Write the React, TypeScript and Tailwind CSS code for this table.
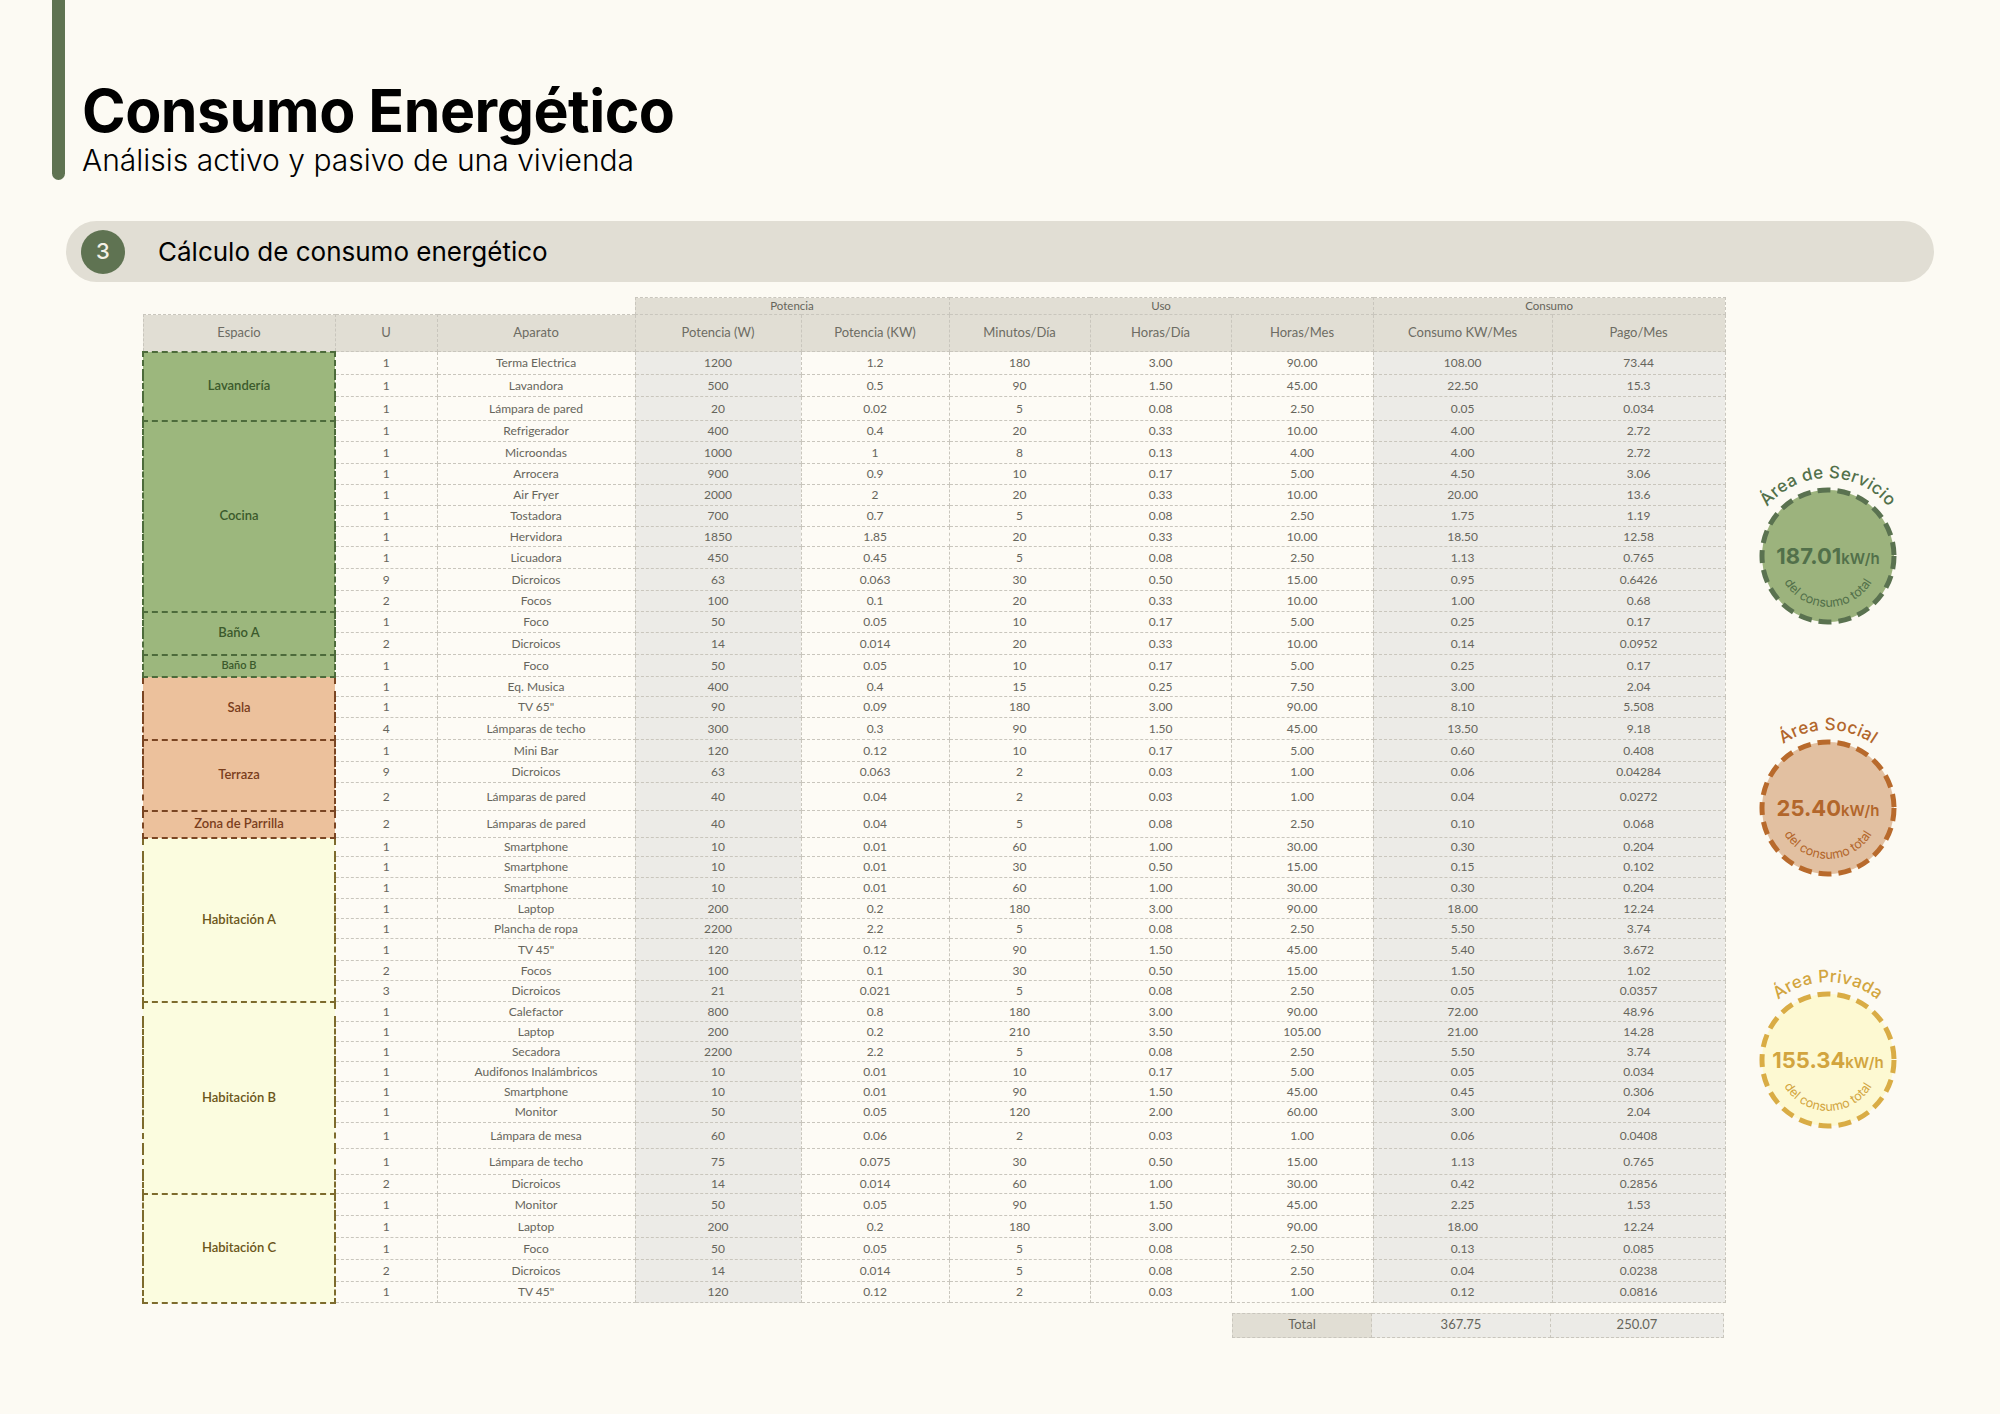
import React from "react";

type Item = [string, string, string, string, string, string, string, string, string, number];
type Tone = "green" | "orange" | "yellow";
type Group = { name: string; tone: Tone; small?: boolean; items: Item[] };

const groups: Group[] = [
  {
    name: "Lavandería",
    tone: "green",
    items: [
      ["1", "Terma Electrica", "1200", "1.2", "180", "3.00", "90.00", "108.00", "73.44", 23],
      ["1", "Lavandora", "500", "0.5", "90", "1.50", "45.00", "22.50", "15.3", 22],
      ["1", "Lámpara de pared", "20", "0.02", "5", "0.08", "2.50", "0.05", "0.034", 24],
    ],
  },
  {
    name: "Cocina",
    tone: "green",
    items: [
      ["1", "Refrigerador", "400", "0.4", "20", "0.33", "10.00", "4.00", "2.72", 21],
      ["1", "Microondas", "1000", "1", "8", "0.13", "4.00", "4.00", "2.72", 22],
      ["1", "Arrocera", "900", "0.9", "10", "0.17", "5.00", "4.50", "3.06", 21],
      ["1", "Air Fryer", "2000", "2", "20", "0.33", "10.00", "20.00", "13.6", 21],
      ["1", "Tostadora", "700", "0.7", "5", "0.08", "2.50", "1.75", "1.19", 21],
      ["1", "Hervidora", "1850", "1.85", "20", "0.33", "10.00", "18.50", "12.58", 20],
      ["1", "Licuadora", "450", "0.45", "5", "0.08", "2.50", "1.13", "0.765", 22],
      ["9", "Dicroicos", "63", "0.063", "30", "0.50", "15.00", "0.95", "0.6426", 22],
      ["2", "Focos", "100", "0.1", "20", "0.33", "10.00", "1.00", "0.68", 21],
    ],
  },
  {
    name: "Baño A",
    tone: "green",
    items: [
      ["1", "Foco", "50", "0.05", "10", "0.17", "5.00", "0.25", "0.17", 21],
      ["2", "Dicroicos", "14", "0.014", "20", "0.33", "10.00", "0.14", "0.0952", 22],
    ],
  },
  {
    name: "Baño B",
    tone: "green",
    small: true,
    items: [["1", "Foco", "50", "0.05", "10", "0.17", "5.00", "0.25", "0.17", 22]],
  },
  {
    name: "Sala",
    tone: "orange",
    items: [
      ["1", "Eq. Musica", "400", "0.4", "15", "0.25", "7.50", "3.00", "2.04", 20],
      ["1", "TV 65\"", "90", "0.09", "180", "3.00", "90.00", "8.10", "5.508", 21],
      ["4", "Lámparas de techo", "300", "0.3", "90", "1.50", "45.00", "13.50", "9.18", 22],
    ],
  },
  {
    name: "Terraza",
    tone: "orange",
    items: [
      ["1", "Mini Bar", "120", "0.12", "10", "0.17", "5.00", "0.60", "0.408", 22],
      ["9", "Dicroicos", "63", "0.063", "2", "0.03", "1.00", "0.06", "0.04284", 21],
      ["2", "Lámparas de pared", "40", "0.04", "2", "0.03", "1.00", "0.04", "0.0272", 28],
    ],
  },
  {
    name: "Zona de Parrilla",
    tone: "orange",
    items: [["2", "Lámparas de pared", "40", "0.04", "5", "0.08", "2.50", "0.10", "0.068", 27]],
  },
  {
    name: "Habitación A",
    tone: "yellow",
    items: [
      ["1", "Smartphone", "10", "0.01", "60", "1.00", "30.00", "0.30", "0.204", 19],
      ["1", "Smartphone", "10", "0.01", "30", "0.50", "15.00", "0.15", "0.102", 21],
      ["1", "Smartphone", "10", "0.01", "60", "1.00", "30.00", "0.30", "0.204", 21],
      ["1", "Laptop", "200", "0.2", "180", "3.00", "90.00", "18.00", "12.24", 20],
      ["1", "Plancha de ropa", "2200", "2.2", "5", "0.08", "2.50", "5.50", "3.74", 20],
      ["1", "TV 45\"", "120", "0.12", "90", "1.50", "45.00", "5.40", "3.672", 22],
      ["2", "Focos", "100", "0.1", "30", "0.50", "15.00", "1.50", "1.02", 20],
      ["3", "Dicroicos", "21", "0.021", "5", "0.08", "2.50", "0.05", "0.0357", 21],
    ],
  },
  {
    name: "Habitación B",
    tone: "yellow",
    items: [
      ["1", "Calefactor", "800", "0.8", "180", "3.00", "90.00", "72.00", "48.96", 20],
      ["1", "Laptop", "200", "0.2", "210", "3.50", "105.00", "21.00", "14.28", 20],
      ["1", "Secadora", "2200", "2.2", "5", "0.08", "2.50", "5.50", "3.74", 20],
      ["1", "Audifonos Inalámbricos", "10", "0.01", "10", "0.17", "5.00", "0.05", "0.034", 20],
      ["1", "Smartphone", "10", "0.01", "90", "1.50", "45.00", "0.45", "0.306", 20],
      ["1", "Monitor", "50", "0.05", "120", "2.00", "60.00", "3.00", "2.04", 21],
      ["1", "Lámpara de mesa", "60", "0.06", "2", "0.03", "1.00", "0.06", "0.0408", 26],
      ["1", "Lámpara de techo", "75", "0.075", "30", "0.50", "15.00", "1.13", "0.765", 26],
      ["2", "Dicroicos", "14", "0.014", "60", "1.00", "30.00", "0.42", "0.2856", 19],
    ],
  },
  {
    name: "Habitación C",
    tone: "yellow",
    items: [
      ["1", "Monitor", "50", "0.05", "90", "1.50", "45.00", "2.25", "1.53", 22],
      ["1", "Laptop", "200", "0.2", "180", "3.00", "90.00", "18.00", "12.24", 22],
      ["1", "Foco", "50", "0.05", "5", "0.08", "2.50", "0.13", "0.085", 22],
      ["2", "Dicroicos", "14", "0.014", "5", "0.08", "2.50", "0.04", "0.0238", 22],
      ["1", "TV 45\"", "120", "0.12", "2", "0.03", "1.00", "0.12", "0.0816", 21],
    ],
  },
];

const toneCls: Record<Tone, string> = {
  green: "bg-[#9cb77d] border-[#4d6b3b] text-[#3b5a2c]",
  orange: "bg-[#ecc19c] border-[#7a4522] text-[#7a3e1c]",
  yellow: "bg-[#fbfcdf] border-[#7d6b2d] text-[#6b561a]",
};

const cell = "border border-dashed border-[#c9c6bd] text-center align-middle p-0";
const light = "bg-[#fdfbf5]";
const grey = "bg-[#ecebe7]";
const colBg = [light, light, grey, light, light, light, light, grey, grey];

const widths = [192, 102, 198, 166, 148, 141, 141, 142, 179, 173];

function Badge({
  id,
  title,
  value,
  fill,
  stroke,
  color,
}: {
  id: string;
  title: string;
  value: string;
  fill: string;
  stroke: string;
  color: string;
}) {
  return (
    <svg width="208" height="252" viewBox="0 0 208 252">
      <defs>
        <path id={`top-${id}`} d="M 26 126 A 78 78 0 0 1 182 126" />
        <path id={`bot-${id}`} d="M 53 126 A 51 51 0 0 0 155 126" />
      </defs>
      <circle cx="104" cy="126" r="66" fill={fill} stroke={stroke} strokeWidth="5" strokeDasharray="13 7" />
      <text fill={color} fontSize="17" fontWeight="500" fontFamily="Inter, sans-serif" letterSpacing="0.3">
        <textPath href={`#top-${id}`} startOffset="50%" textAnchor="middle">
          {title}
        </textPath>
      </text>
      <text x="104" y="134" textAnchor="middle" fill={color} fontFamily="Inter, sans-serif">
        <tspan fontSize="22" fontWeight="700">{value}</tspan>
        <tspan fontSize="15" fontWeight="600">kW/h</tspan>
      </text>
      <text fill={color} fontSize="12.5" fontWeight="400" fontFamily="Inter, sans-serif">
        <textPath href={`#bot-${id}`} startOffset="50%" textAnchor="middle">
          del consumo total
        </textPath>
      </text>
    </svg>
  );
}

export default function App() {
  return (
    <div className="w-[2000px] h-[1414px] bg-[#fcfaf3] overflow-hidden font-['Inter',sans-serif]">
      {/* Header */}
      <div className="flex items-start">
        <div className="ml-[52px] w-[13px] h-[180px] bg-[#5f7352] rounded-b-full" />
        <div className="ml-[17px] pt-[81px]">
          <h1 className="text-[59px] leading-none font-bold text-black tracking-[-0.5px]">Consumo Energético</h1>
          <p className="mt-[5px] text-[30px] leading-none font-light text-black">Análisis activo y pasivo de una vivienda</p>
        </div>
      </div>

      {/* Section pill */}
      <div className="ml-[66px] mt-[41px] w-[1868px] h-[61px] rounded-full bg-[#e1ded4] flex items-center pl-[15px]">
        <div className="w-[44px] h-[44px] rounded-full bg-[#5f7352] flex items-center justify-center text-[#f4f1e6] text-[22px] font-medium">
          3
        </div>
        <span className="ml-[33px] text-[26px] text-black">Cálculo de consumo energético</span>
      </div>

      {/* Table + badges */}
      <div className="flex items-start ml-[142px] mt-[15px]">
        <div className="w-[1582px]">
          <table className="table-fixed w-[1582px] font-['Lato',sans-serif] text-[12px] text-[#66655b]">
            <colgroup>
              {widths.map((w, i) => (
                <col key={i} style={{ width: w }} />
              ))}
            </colgroup>
            <thead>
              <tr className="h-[17px]">
                <td colSpan={3} className="p-0" />
                <th colSpan={2} className={`${cell} bg-[#e1ded4] font-normal text-[11.5px] leading-none`}>Potencia</th>
                <th colSpan={3} className={`${cell} bg-[#e1ded4] font-normal text-[11.5px] leading-none`}>Uso</th>
                <th colSpan={2} className={`${cell} bg-[#e1ded4] font-normal text-[11.5px] leading-none`}>Consumo</th>
              </tr>
              <tr className="h-[37px] bg-[#e1ded4]">
                {[
                  "Espacio",
                  "U",
                  "Aparato",
                  "Potencia (W)",
                  "Potencia (KW)",
                  "Minutos/Día",
                  "Horas/Día",
                  "Horas/Mes",
                  "Consumo KW/Mes",
                  "Pago/Mes",
                ].map((h) => (
                  <th key={h} className={`${cell} font-normal text-[13px] text-[#6d6c63]`}>
                    {h}
                  </th>
                ))}
              </tr>
            </thead>
            <tbody>
              {groups.map((g) =>
                g.items.map((it, idx) => (
                  <tr key={g.name + idx} style={{ height: it[9] }}>
                    {idx === 0 && (
                      <td
                        rowSpan={g.items.length}
                        className={`border-2 border-dashed text-center align-middle p-0 font-semibold ${
                          g.small ? "text-[11px]" : "text-[13px]"
                        } ${toneCls[g.tone]}`}
                      >
                        {g.name}
                      </td>
                    )}
                    {it.slice(0, 9).map((v, ci) => (
                      <td key={ci} className={`${cell} ${colBg[ci]} leading-none`}>
                        {v}
                      </td>
                    ))}
                  </tr>
                ))
              )}
            </tbody>
          </table>

          {/* Total */}
          <div className="flex mt-[9px] ml-[1090px] h-[25px] font-['Lato',sans-serif] text-[13px] text-[#66655b]">
            <div className="w-[140px] border border-dashed border-[#c9c6bd] bg-[#e1ded4] flex items-center justify-center">
              Total
            </div>
            <div className="w-[179px] border border-l-0 border-dashed border-[#c9c6bd] bg-[#ecebe7] flex items-center justify-center">
              367.75
            </div>
            <div className="w-[173px] border border-l-0 border-dashed border-[#c9c6bd] bg-[#ecebe7] flex items-center justify-center">
              250.07
            </div>
          </div>
        </div>

        <div className="flex flex-col pt-[133px]">
          <Badge id="serv" title="Área de Servicio" value="187.01" fill="#9cb37d" stroke="#5a7250" color="#52704a" />
          <Badge id="soc" title="Área Social" value="25.40" fill="#e2c0a1" stroke="#b86a2c" color="#b2662b" />
          <Badge id="priv" title="Área Privada" value="155.34" fill="#fdf9d2" stroke="#d9ac45" color="#d2a53f" />
        </div>
      </div>
    </div>
  );
}
